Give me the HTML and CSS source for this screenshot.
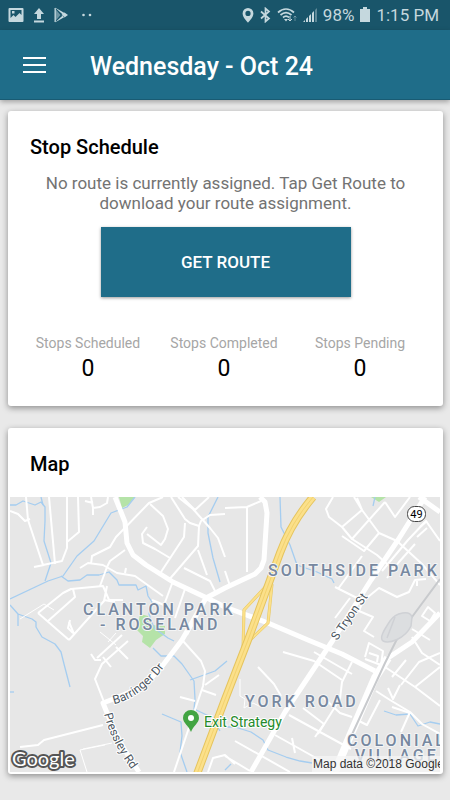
FILE: index.html
```html
<!DOCTYPE html>
<html lang="en">
<head>
    <meta charset="UTF-8">
    <meta name="viewport" content="width=device-width, initial-scale=1.0">
    <title>Stop Schedule</title>
    <link rel="stylesheet" href="styles.css">
</head>
<body>

<div class="status-bar">
    <div class="status-group">
        <svg class="icon" width="16" height="16" viewBox="0 0 16 16">
            <path fill-rule="evenodd" d="M1.500 1h13a1 1 0 0 1 1 1v12a1 1 0 0 1-1 1h-13a1 1 0 0 1-1-1V2a1 1 0 0 1 1-1zM2.500 3v8l3-3 2 2 4-4 2 2V3zM4 4h2.500v2.500H4z"/>
        </svg>
        <svg class="icon icon-upload" width="12" height="16" viewBox="0 0 12 16">
            <path d="M6 1l5 6H8v5H4V7H1zM1 13.500h10v2H1z"/>
        </svg>
        <svg class="icon icon-play" width="15" height="16" viewBox="0 0 15 16">
            <path class="play-side" d="M1 1.500L6.500 8 1 14.500z"/>
            <path d="M1 0.500l9.500 5.500-1.800 1.500L2 1.500zM1 15.500L10.500 10 8.700 8.500 2 14.500zM7.500 8l3-2.500L14 8l-3.500 2.500z"/>
            <path d="M0.500 1h1.300v14H0.500z"/>
        </svg>
        <svg class="icon icon-dots" width="10" height="16" viewBox="0 0 10 16">
            <circle cx="1.500" cy="8" r="1.300"/>
            <circle cx="8" cy="8" r="1.300"/>
        </svg>
    </div>
    <div class="status-group status-right">
        <svg class="icon" width="12" height="16" viewBox="0 0 12 16">
            <path fill-rule="evenodd" d="M6 1a5.400 5.400 0 0 1 5.400 5.400C11.400 10.500 6 15.500 6 15.500S.6 10.500.6 6.400A5.400 5.400 0 0 1 6 1zm0 2.800a2.600 2.600 0 1 0 0 5.200 2.600 2.600 0 0 0 0-5.200z"/>
        </svg>
        <svg class="icon-line icon-bluetooth" width="11" height="16" viewBox="0 0 11 16">
            <path d="M1 4.500l8 7L5.500 14.500v-13L9 4.500l-8 7"/>
        </svg>
        <svg class="icon-line" width="20" height="16" viewBox="0 0 20 16">
            <path d="M1 5.500c5-4.500 11-4.500 16 0M3.500 8c3.500-3 7.500-3 11 0M6 10.500c2-1.700 4-1.700 6 0"/>
            <path class="thin" d="M13 9v5M11 12l2 2 2-2"/>
            <path class="thin faded" d="M18 14V9M16.500 10.500L18 9l1.500 1.500"/>
            <path class="solid" d="M7 12h4l-2 2.500z"/>
        </svg>
        <svg class="icon" width="16" height="16" viewBox="0 0 16 16">
            <path d="M1 15l2-2v2zM4 12l2-2v5H4zM7 9l2-2v8H7zM10 6l2-2v11h-2z"/>
            <path class="faded" d="M13 3l2-2v14h-2z"/>
        </svg>
        <span>98%</span>
        <svg class="icon" width="12" height="16" viewBox="0 0 12 16">
            <path d="M4 0h4v2h3v13H1V2h3z"/>
        </svg>
        <span>1:15 PM</span>
    </div>
</div>

<header class="app-bar">
    <button class="menu-button" aria-label="Menu">
        <span></span>
        <span></span>
        <span></span>
    </button>
    <h1>Wednesday - Oct 24</h1>
</header>

<main>
    <section class="card schedule">
        <h2>Stop Schedule</h2>
        <p class="message">No route is currently assigned. Tap Get Route to download your route assignment.</p>
        <button class="route-button">GET ROUTE</button>
        <dl class="stats">
            <div>
                <dt>Stops Scheduled</dt>
                <dd>0</dd>
            </div>
            <div>
                <dt>Stops Completed</dt>
                <dd>0</dd>
            </div>
            <div>
                <dt>Stops Pending</dt>
                <dd>0</dd>
            </div>
        </dl>
    </section>

    <section class="card map-card">
        <h2>Map</h2>
        <svg class="map" viewBox="0 0 430 275">
            <!-- parks -->
            <g class="park">
                <path d="M109 0h16l-7 8-6 3z"/>
                <path d="M361 0h15l-7 5z"/>
                <path d="M130 117l8 2 4 9 13 1v8l-9 6-6 8-8-6 1-6-6-6z"/>
            </g>

            <!-- creeks -->
            <g class="water">
                <path d="M0 8l6 0 7-4 12 4 6-3 4 5v14l-1 20 7 22-6 18"/>
                <path d="M31 0l2 8"/>
                <path d="M125 0l-8 10-16 6-17 28-17 15-14 20-15 5L0 102"/>
                <path d="M51 79l7 5 12-1 7-5 12 0 10-3 8 8 2 5 17 0 2 5 8-4 2 10 4 6-3 12 5 14 14 10 6 3"/>
                <path d="M0 108l8 9v12M8 117l14 5 4 3 0 5 6 10 13 7 6 8 3 12 6 23"/>
                <path d="M208 0l-10 20v16l5 25 7 24"/>
                <path d="M270 0l1 30 9 18 7 20 20 7 15 7 2 4"/>
                <path d="M365 0l-2 9"/>
                <path d="M143 151l8 8 13 0 8 8 12 17 1 18-1 10 17 8 9 14"/>
                <path d="M180 183l25-9 12-10"/>
                <path d="M152 217l19 8 1 14-2 16 7 20"/>
                <path d="M215 230l10 0 16 5 12 8 5 10 18 7 14 4 12 2"/>
                <path d="M215 273l6-6"/>
                <path d="M374 214l12 4 14-1 8 12 12-4 10 2"/>
                <path d="M0 195h4"/>
            </g>

            <!-- side streets -->
            <g class="street">
                <path d="M16 0l2 23 15 45 19-4 5-13V0M39 0l6 67M68 0l1 35-12 10"/>
                <path d="M0 14l8 3 7 7 5-2M24 70l10-2M81 0l2 11 7-1 7-4 1-6M83 11v7M75 4l8 2"/>
                <path d="M153 0l-14 6-33 34-6 10-18 9-1 8M70 71l8-5 15 2 14 8 18 3 28 20M97 70l3-6 15-11M97 70l-7 19M115 76l1-5"/>
                <path d="M161 0l14 22 5 4 9 3 2-5 9-6 15-1M175 26l-1 14-23 35M140 7l13 12 5 13-3 10-4 6-14-11M137 30l-5 7 1 9 12 6 15 9"/>
                <path d="M168 0l15 12 17 19 8 10 7 19M189 29l-1 20-30 35M188 53l9 25M174 71l26 13 5 10M172 0l13 13M185 13l14-13"/>
                <path d="M28 116l25-20 8-4 32-3 6 14 14 0M28 116l31 27M63 92l2 8-27 24M59 143l35-39 3-15M59 125l5 12"/>
                <path d="M94 103l11 2M60 123l-2 8 5 5"/>
                <path d="M142 103l12 5 9-24M175 92l-10 29"/>
                <path d="M193 107l-16 31"/>
                <path d="M173 144l18 20 4 10-2 15-29 86M195 188l14-10M192 193l14 5M170 200l15 4"/>
                <path d="M118 144l-26 23-7 15 9 23M81 157l4 6 6 0M93 160l8 10M87 161l25-23M106 150l12 12"/>
                <path d="M93 228l-59 15-6 5-18 2"/>
                <path d="M237 10v65M215 11l22-1 14-6M215 74l5 15"/>
                <path d="M323 0l-7 12 3 8 13 10 10 12 33-37M332 30l20-17-5-12M344 0l8 13 17 23 18 8M369 36l-15 18-22-15"/>
                <path d="M375 5l10 15 15-20M342 42l25 16 18 16M352 59l-24 33M387 44l25 23 18 21M372 74l26-31 18-19 14 20"/>
                <path d="M377 81l12-16 16-18M325 90l28 14 16-13 18 9 12-5 6-12 11-1M340 101l-15 20M353 104l-4 10 14 6-9 14 10 6"/>
                <path d="M407 84l0 5M410 30l7-6M407 40l10-9M418 110l7 6-5 8-8-5zM402 132l18 11"/>
                <path d="M248 170l16 17 7 12M273 155l31 9 28 19"/>
                <path d="M304 155l38 22M342 165l-10 20-2 17-22 35"/>
                <path d="M279 218l62 34M293 211l21 16-9 13M314 201l16 15 12 4M225 244l55 31M265 238l50 28 8 9M282 241l3 15"/>
                <path d="M215 259l25 15M198 275l5-14 12-3 10 9"/>
                <path d="M375 170l30 20 25 19M366 194l14 9 20 12 12 12 18 10M396 163l-14 17M402 140l10 16 18 12M430 156l-21 9-18 23M430 170l-25 20M378 191l5 11 7-14M400 215l-9 20"/>
                <path d="M345 222l12 6 13-25M382 210l18 6"/>
                <path d="M355 160l4-14 14 8-2 14-16-6M359 156l9 3-1 6"/>
            </g>
            <g class="street faint">
                <path d="M95 248l-25 5 7 22M73 252l29-6M10 122l24-15 10 6"/>
                <path d="M90 135l10 8 6 5M98 145l8-9"/>
                <path d="M230 182v17l5 3-1 9 9-5 8 4"/>
            </g>

            <!-- main roads -->
            <g class="road">
                <path d="M105 0l10 25 2 21 6 12 13 10 27 17 34 16 18 9 43 16 40 17 34 14 33 17"/>
                <path d="M250 0l5 5 2 11-3 47-3 8-6 6-30 14-19 10-24 42-19 25c-15 20-30 27-60 38l9 22 12 24 15 23"/>
                <path d="M415 0l-27 43-27 40-38 60-48 72-34 60"/>
                <path d="M430 116l-28 29-24 16"/>
                <path class="wide" d="M378 161l-13 20-28 65-12 29"/>
                <path d="M409 0l21 15"/>
            </g>

            <!-- rail line and yard -->
            <g class="rail">
                <path d="M430 82l-28 38-16 24-11 22-36 78"/>
                <path class="yard" d="M402 120c-2-7-16-5-22 4-6 9-11 17-7 20 6 3 22-2 28-15zM377 141l8-21"/>
            </g>

            <!-- interstate -->
            <g class="ramp-edge">
                <path d="M258 87l-24 26-1 40M262 87l-4 39-20 19-5 14"/>
            </g>
            <g class="ramp">
                <path d="M258 87l-24 26-1 40M262 87l-4 39-20 19-5 14"/>
            </g>
            <path class="highway-edge" d="M303 0q-22 26-33 56L238 143l-24 62-27 72"/>
            <path class="highway" d="M303 0q-22 26-33 56L238 143l-24 62-27 72"/>
            <path class="highway-line" d="M303 0q-22 26-33 56L238 143l-24 62-27 72"/>

            <!-- route shield -->
            <rect class="shield" x="397.500" y="9.500" width="18" height="15" rx="7"/>
            <text class="shield-text" x="406.500" y="21">49</text>

            <!-- place names -->
            <g class="area">
                <text x="73" y="118">CLANTON PARK</text>
                <text x="90" y="133">- ROSELAND</text>
                <text x="258" y="79">SOUTHSIDE PARK</text>
                <text x="235" y="210">YORK ROAD</text>
                <text x="337" y="249">COLONIAL</text>
                <text x="345" y="264">VILLAGE</text>
            </g>

            <path id="barringer" class="guide" d="M104 207q28-6 54-42"/>
            <path id="pressley" class="guide" d="M94 217q8 32 34 64"/>
            <g class="street-name">
                <text><textPath href="#barringer">Barringer Dr</textPath></text>
                <text><textPath href="#pressley">Pressley Rd</textPath></text>
                <text transform="translate(327 144) rotate(-55)">S Tryon St</text>
            </g>

            <!-- marker -->
            <path class="pin" d="M181 213a8 8 0 0 1 8 8c0 5-6 8-8 14-2-6-8-9-8-14a8 8 0 0 1 8-8z"/>
            <circle class="pin-hole" cx="181" cy="221" r="3"/>
            <text class="poi" x="194" y="230">Exit Strategy</text>

            <text class="logo" x="2" y="269">Google</text>
            <rect class="credit-box" x="302" y="259" width="128" height="16"/>
            <text class="credit" x="303" y="271">Map data ©2018 Google</text>
        </svg>
    </section>
</main>

</body>
</html>
```

FILE: styles.css
```css
* {
    box-sizing: border-box;
}

body {
    margin: 0;
    min-height: 100vh;
    background-color: #e9e9e9;
    font-family: Roboto, "Liberation Sans", sans-serif;
    color: #000;
}

h1,
h2,
p,
dl,
dd {
    margin: 0;
}

/* status bar */
.status-bar {
    display: flex;
    justify-content: space-between;
    align-items: center;
    height: 30px;
    padding: 0 11px 0 8px;
    background-color: #19556a;
    color: #c5d8de;
    font-size: 17px;
}

.status-group {
    display: flex;
    align-items: center;
}

.status-right {
    gap: 5px;
}

.icon {
    fill: #c5d8de;
}

.icon-upload {
    margin-left: 9px;
}

.icon-play {
    margin-left: 9px;
}

.play-side {
    opacity: 0.5;
}

.icon-dots {
    margin-left: 13px;
}

.icon-bluetooth {
    margin: 0 1px;
}

.icon-line {
    fill: none;
    stroke: #c5d8de;
    stroke-width: 1.7;
}

.thin {
    stroke-width: 1;
}

.solid {
    fill: #c5d8de;
    stroke: none;
}

.faded {
    opacity: 0.4;
}

/* app bar */
.app-bar {
    display: flex;
    align-items: center;
    gap: 36px;
    height: 70px;
    padding: 0 15px;
    background-color: #1f6d89;
    border-bottom: 1px solid #195b73;
    box-shadow: 0 2px 5px rgba(0, 0, 0, 0.3);
    color: #fff;
}

.app-bar h1 {
    font-size: 25px;
    font-weight: 500;
    padding-top: 4px;
}

.menu-button {
    display: flex;
    flex-direction: column;
    gap: 5px;
    padding: 8px;
    border: none;
    background: none;
    cursor: pointer;
}

.menu-button span {
    width: 23px;
    height: 2px;
    background-color: #fff;
}

/* cards */
main {
    display: flex;
    flex-direction: column;
    gap: 22px;
    padding: 11px 7px 24px 8px;
}

.card {
    background-color: #fff;
    border-radius: 3px;
    box-shadow: 0 2px 6px rgba(0, 0, 0, 0.4);
}

.card h2 {
    padding-left: 22px;
    font-size: 20px;
    font-weight: 500;
    line-height: 24px;
}

.schedule {
    display: flex;
    flex-direction: column;
    padding: 24px 0 21px;
}

.message {
    margin-top: 14px;
    padding: 0 32px;
    color: #737373;
    font-size: 17px;
    line-height: 20px;
    text-align: center;
}

.route-button {
    align-self: center;
    width: 250px;
    height: 70px;
    margin-top: 14px;
    border: none;
    background-color: #1f6d89;
    box-shadow: 0 1px 3px rgba(0, 0, 0, 0.4);
    color: #fff;
    font-family: inherit;
    font-size: 17px;
    font-weight: 500;
    cursor: pointer;
}

.stats {
    display: grid;
    grid-template-columns: repeat(3, 1fr);
    margin-top: 36px;
    padding: 0 15px 0 12px;
    text-align: center;
}

.stats dt {
    color: #a6a6a6;
    font-size: 14px;
    line-height: 20px;
}

.stats dd {
    font-size: 23px;
    line-height: 32px;
}

/* map */
.map-card {
    padding: 24px 3px 2px 2px;
}

.map-card h2 {
    padding-left: 20px;
}

.map {
    display: block;
    width: 100%;
    margin-top: 21px;
    background-color: #e7e7e7;
}

.map path {
    stroke-linejoin: round;
}

.map .park {
    fill: #b5e3a8;
}

.water {
    fill: none;
    stroke: #a5cdf0;
    stroke-width: 1.3;
}

.street {
    fill: none;
    stroke: #fff;
    stroke-width: 2;
}

.faint {
    stroke-width: 1;
}

.rail {
    fill: none;
    stroke: #c8cacd;
    stroke-width: 2;
}

.yard {
    fill: #dcdee0;
    stroke: #cfd1d5;
    stroke-width: 1.5;
}

.road {
    fill: none;
    stroke: #fff;
    stroke-width: 5;
}

.wide {
    stroke-width: 8;
}

.ramp-edge {
    fill: none;
    stroke: #e8c65c;
    stroke-width: 3;
}

.ramp {
    fill: none;
    stroke: #fbe08a;
    stroke-width: 2;
}

.highway-edge {
    fill: none;
    stroke: #e5c45e;
    stroke-width: 8;
}

.highway {
    fill: none;
    stroke: #fbe08a;
    stroke-width: 6;
}

.highway-line {
    fill: none;
    stroke: #f3d26f;
    stroke-width: 1;
}

.guide {
    fill: none;
}

.shield {
    fill: #fff;
    stroke: #444;
}

.shield-text {
    font-size: 11px;
    text-anchor: middle;
}

.area {
    fill: #7788a0;
    stroke: #f4f5f6;
    stroke-width: 2;
    stroke-linejoin: round;
    paint-order: stroke;
    font-size: 16px;
    font-weight: 500;
    letter-spacing: 3px;
}

.street-name {
    fill: #4c5661;
    stroke: #fff;
    stroke-width: 2;
    paint-order: stroke;
    font-size: 12px;
}

.pin {
    fill: #42a442;
}

.pin-hole {
    fill: #fff;
}

.poi {
    fill: #258a2b;
    stroke: #fff;
    stroke-width: 2;
    paint-order: stroke;
    font-size: 14px;
}

.logo {
    fill: #fff;
    stroke: #555;
    stroke-width: 4;
    stroke-linejoin: round;
    paint-order: stroke;
    font-family: Lato, sans-serif;
    font-size: 20px;
    font-weight: 400;
}

.credit-box {
    fill: #f5f5f5;
    opacity: 0.75;
}

.credit {
    fill: #333;
    font-family: "Liberation Sans", Arial, sans-serif;
    font-size: 12px;
}
```
